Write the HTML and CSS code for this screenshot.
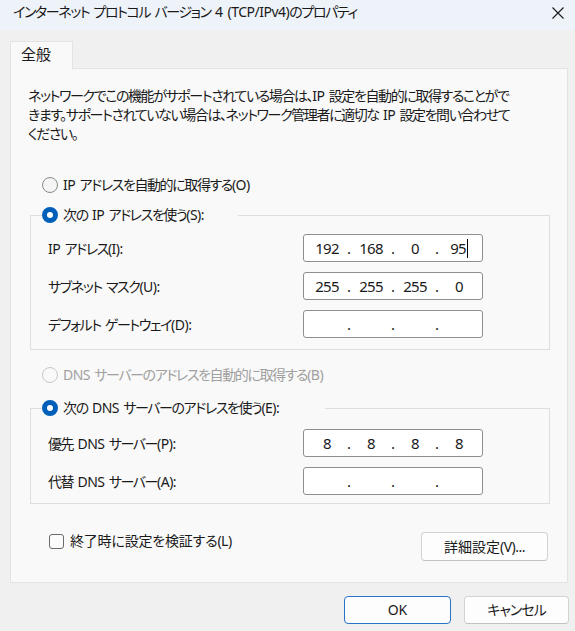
FILE: index.html
```html
<!DOCTYPE html>
<html lang="ja">
<head>
<meta charset="utf-8">
<title>インターネット プロトコル バージョン 4 (TCP/IPv4)のプロパティ</title>
<link rel="stylesheet" href="styles.css">
</head>
<body>
<div class="window">
  <div class="titlebar">
    <span class="title">インターネット プロトコル バージョン <span class="lat">4 (TCP/IPv4)</span>のプロパティ</span>
    <svg class="close" width="12" height="12" viewBox="0 0 12 12"><path d="M0.5 0.5 L11.5 11.5 M11.5 0.5 L0.5 11.5" stroke="#1a1a1a" stroke-width="1.1" fill="none"/></svg>
  </div>
  <div class="body">
    <div class="tabs"><div class="tab">全般</div></div>
    <div class="panel">
      <p class="desc">ネットワークでこの機能がサポートされている場合は、<span class="lat">IP</span> 設定を自動的に取得することがで<br>きます。サポートされていない場合は、ネットワーク管理者に適切な <span class="lat">IP</span> 設定を問い合わせて<br>ください。</p>

      <label class="radio radio-first"><span class="rb"></span><span class="lat">IP</span> アドレスを自動的に取得する<span class="lat">(O)</span></label>

      <fieldset class="group group-ip">
        <legend class="legend legend-ip"><span class="rb rb-on"></span>次の <span class="lat">IP</span> アドレスを使う<span class="lat">(S):</span></legend>
        <div class="row">
          <span class="label"><span class="lat">IP</span> アドレス<span class="lat">(I):</span></span>
          <div class="ipbox"><span class="oct">192</span><span class="dot">.</span><span class="oct">168</span><span class="dot">.</span><span class="oct">0</span><span class="dot">.</span><span class="oct">95<span class="caret"></span></span></div>
        </div>
        <div class="row">
          <span class="label">サブネット マスク<span class="lat">(U):</span></span>
          <div class="ipbox"><span class="oct">255</span><span class="dot">.</span><span class="oct">255</span><span class="dot">.</span><span class="oct">255</span><span class="dot">.</span><span class="oct">0</span></div>
        </div>
        <div class="row">
          <span class="label">デフォルト ゲートウェイ<span class="lat">(D):</span></span>
          <div class="ipbox"><span class="oct"></span><span class="dot">.</span><span class="oct"></span><span class="dot">.</span><span class="oct"></span><span class="dot">.</span><span class="oct"></span></div>
        </div>
      </fieldset>

      <label class="radio radio-disabled"><span class="rb rb-disabled"></span><span class="lat">DNS</span> サーバーのアドレスを自動的に取得する<span class="lat">(B)</span></label>

      <fieldset class="group group-dns">
        <legend class="legend legend-dns"><span class="rb rb-on"></span>次の <span class="lat">DNS</span> サーバーのアドレスを使う<span class="lat">(E):</span></legend>
        <div class="row">
          <span class="label">優先 <span class="lat">DNS</span> サーバー<span class="lat">(P):</span></span>
          <div class="ipbox"><span class="oct">8</span><span class="dot">.</span><span class="oct">8</span><span class="dot">.</span><span class="oct">8</span><span class="dot">.</span><span class="oct">8</span></div>
        </div>
        <div class="row">
          <span class="label">代替 <span class="lat">DNS</span> サーバー<span class="lat">(A):</span></span>
          <div class="ipbox"><span class="oct"></span><span class="dot">.</span><span class="oct"></span><span class="dot">.</span><span class="oct"></span><span class="dot">.</span><span class="oct"></span></div>
        </div>
      </fieldset>

      <div class="bottom">
        <label class="check"><span class="cb"></span>終了時に設定を検証する<span class="lat">(L)</span></label>
        <button class="btn btn-detail">詳細設定<span class="lat">(V)...</span></button>
      </div>
    </div>
    <div class="actions">
      <button class="btn btn-ok">OK</button>
      <button class="btn btn-cancel">キャンセル</button>
    </div>
  </div>
</div>
</body>
</html>
```
FILE: styles.css
```css
* { box-sizing: border-box; }
html, body { margin: 0; padding: 0; }
body {
  width: 575px;
  height: 631px;
  overflow: hidden;
  background: #f0f0f0;
  font-family: "Noto Sans", "Noto Sans CJK JP", sans-serif;
  font-size: 14px;
  letter-spacing: -1.4px;
  word-spacing: 2px;
  color: #1a1a1a;
  font-feature-settings: "palt";
}
.lat { letter-spacing: -0.5px; }
.window { width: 575px; height: 631px; display: flex; flex-direction: column; }
.titlebar {
  height: 30px;
  background: #eef3f9;
  display: flex;
  align-items: flex-start;
  justify-content: space-between;
  padding: 2px 11px 0 13px;
}
.title { line-height: 20px; white-space: nowrap; }
.close { margin-top: 5px; }
.body { padding: 11px 7px 0 10px; }
.tabs { display: flex; }
.tab {
  width: 63px;
  height: 28px;
  margin-bottom: -1px;
  position: relative;
  z-index: 1;
  background: #f9f9f9;
  border: 1px solid #e3e3e3;
  border-bottom: none;
  padding-left: 10px;
  line-height: 24px;
  font-size: 15px;
  letter-spacing: 0;
}
.panel {
  background: #f9f9f9;
  border: 1px solid #e3e3e3;
  padding: 17px 17px 21px 17px;
}
.desc { margin: 0; line-height: 19px; white-space: nowrap; }
.radio, .check { display: flex; align-items: center; height: 20px; line-height: 20px; white-space: pre; }
.check { letter-spacing: -0.2px; }
.radio-first { margin: 32px 0 0 14px; }
.radio-disabled { margin: 15px 0 0 14px; color: #a0a0a0; }
.rb {
  width: 16px;
  height: 16px;
  border-radius: 50%;
  border: 1px solid #8a8a8a;
  background: #f5f5f5;
  margin-right: 5px;
  flex: none;
}
.rb-on { border: 5px solid #005fb8; background: #ffffff; }
.rb-disabled { border-color: #c8c8c8; background: #f9f9f9; }
.group {
  margin: 10px 0 0 2px;
  border: 1px solid #dedede;
  padding: 0 0 0 11px;
  min-width: 0;
}
.group-ip { padding-top: 9px; padding-bottom: 11px; }
.group-dns { margin-top: 13px; padding-top: 11px; padding-bottom: 8px; }
.legend {
  display: flex;
  align-items: center;
  height: 20px;
  line-height: 20px;
  padding: 0;
  white-space: pre;
}
.legend-ip { width: 196px; }
.legend-dns { width: 283px; }
.row {
  display: flex;
  align-items: center;
  justify-content: space-between;
  padding: 0 66px 0 6px;
  height: 28px;
}
.row + .row { margin-top: 10px; }
.label { white-space: nowrap; }
.ipbox {
  width: 180px;
  height: 28px;
  background: #ffffff;
  border: 1px solid #8f8f8f;
  border-radius: 3px;
  display: flex;
  align-items: center;
  padding-left: 5px;
  font-size: 15px;
  line-height: 20px;
  letter-spacing: -0.8px;
}
.oct { width: 36px; text-align: center; display: inline-flex; justify-content: center; align-items: center; }
.dot { width: 8px; text-align: center; letter-spacing: 0; }
.caret { display: inline-block; width: 1px; height: 19px; background: #000; margin-left: 1px; }
.bottom {
  display: flex;
  justify-content: space-between;
  align-items: flex-start;
  margin: 27px 2px 0 21px;
}
.cb {
  width: 15px;
  height: 15px;
  border: 1px solid #6a6a6a;
  border-radius: 3px;
  background: #fbfbfb;
  margin-right: 6px;
  flex: none;
}
.btn {
  font-family: inherit;
  font-size: 14px;
  letter-spacing: -1px;
  color: #1a1a1a;
  background: #fdfdfd;
  border: 1px solid #d3d3d3;
  border-bottom-color: #c2c2c2;
  border-radius: 4px;
  padding: 0;
  line-height: 20px;
  font-feature-settings: "palt";
}
.btn-detail { width: 127px; height: 29px; margin-top: 1px; letter-spacing: 0; }
.actions {
  display: flex;
  justify-content: flex-end;
  gap: 13px;
  margin: 13px -1px 0 0;
}
.btn-ok { width: 107px; height: 28px; border: 1px solid #2a73c4; letter-spacing: 0; }
.btn-cancel { width: 105px; height: 28px; }
```
